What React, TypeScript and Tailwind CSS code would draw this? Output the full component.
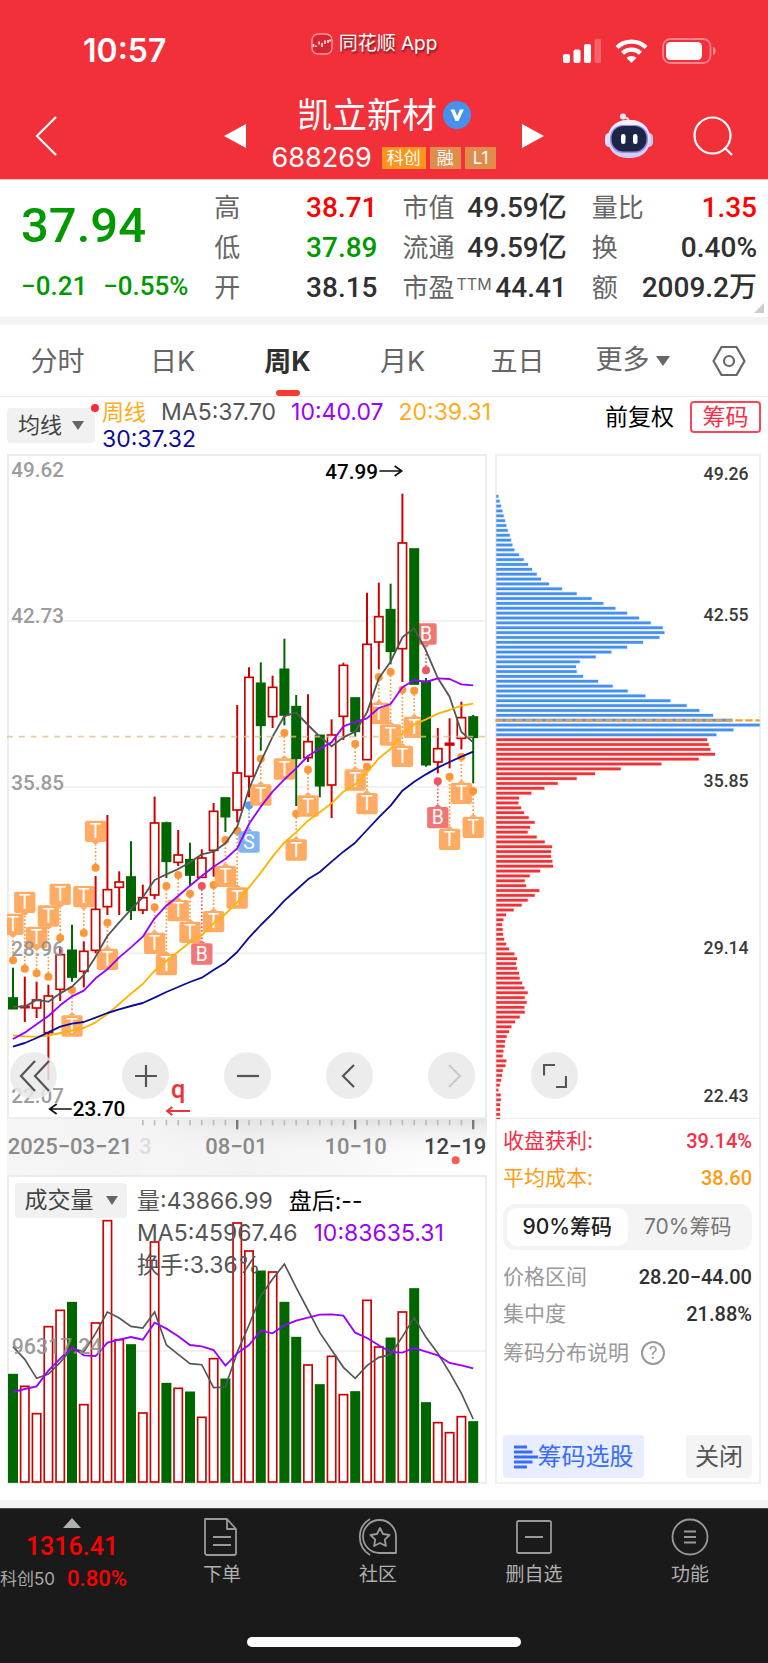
import { useState } from "react";
import clsx from "clsx";

type Candle = ["up" | "down", number, number, number, number];
type Marker = [number, "T" | "B" | "S", number, number];

const STEP = 35.4;
const cx = (i: number) => 39 + i * STEP;

// side, high, body top, body bottom, low
const candles: Candle[] = [
  ["down", 1541, 1632, 1664, 1664],
  ["up", 1568, 1657, 1661, 1704],
  ["up", 1583, 1638, 1662, 1692],
  ["up", 1592, 1626, 1736, 1878],
  ["up", 1478, 1502, 1606, 1641],
  ["down", 1412, 1489, 1569, 1583],
  ["up", 1462, 1492, 1552, 1600],
  ["up", 1266, 1366, 1489, 1498],
  ["up", 1083, 1307, 1358, 1383],
  ["up", 1252, 1284, 1300, 1383],
  ["down", 1162, 1269, 1369, 1398],
  ["up", 1292, 1331, 1368, 1380],
  ["up", 1028, 1107, 1323, 1336],
  ["down", 1103, 1107, 1222, 1272],
  ["up", 1128, 1203, 1225, 1236],
  ["down", 1166, 1217, 1263, 1293],
  ["up", 1186, 1212, 1270, 1270],
  ["up", 1047, 1072, 1189, 1268],
  ["down", 1032, 1032, 1088, 1134],
  ["up", 753, 957, 1068, 1105],
  ["up", 640, 670, 967, 1030],
  ["down", 625, 688, 814, 890],
  ["up", 665, 700, 788, 822],
  ["down", 554, 646, 783, 814],
  ["down", 723, 758, 913, 1056],
  ["up", 721, 863, 911, 924],
  ["down", 844, 844, 995, 1030],
  ["up", 796, 843, 993, 1092],
  ["up", 626, 634, 787, 858],
  ["down", 732, 732, 832, 848],
  ["up", 416, 571, 917, 917],
  ["up", 386, 488, 564, 646],
  ["down", 389, 467, 592, 631],
  ["up", 119, 267, 584, 684],
  ["down", 285, 285, 690, 690],
  ["down", 672, 682, 932, 938],
  ["up", 822, 884, 924, 958],
  ["up", 793, 868, 873, 943],
  ["up", 743, 791, 853, 886],
  ["down", 783, 789, 850, 988],
];

const priceLines = [
  {
    color: "#555555",
    ys: [1658, 1658, 1638, 1643, 1618, 1598, 1563, 1508, 1446, 1405, 1366, 1330, 1278, 1261, 1245, 1225, 1201, 1193, 1168, 1118, 1005, 923, 848, 786, 776, 813, 848, 877, 850, 833, 775, 673, 623, 550, 523, 590, 672, 728, 834, 865],
  },
  {
    color: "#ffb400",
    ys: [1744, 1747, 1748, 1745, 1737, 1730, 1722, 1705, 1680, 1650, 1619, 1590, 1550, 1521, 1493, 1465, 1444, 1408, 1380, 1345, 1300, 1256, 1208, 1165, 1135, 1100, 1075, 1048, 1013, 991, 956, 913, 885, 838, 811, 796, 779, 768, 755, 749],
  },
  {
    color: "#9900ff",
    ys: [1755, 1736, 1711, 1686, 1654, 1627, 1610, 1573, 1546, 1510, 1480, 1448, 1393, 1355, 1326, 1295, 1266, 1238, 1215, 1183, 1110, 1058, 1013, 976, 943, 906, 884, 865, 817, 804, 793, 762, 750, 700, 678, 684, 673, 675, 691, 694],
  },
  {
    color: "#0c0c9c",
    ys: [1778, 1767, 1752, 1735, 1718, 1709, 1704, 1691, 1677, 1666, 1656, 1647, 1631, 1614, 1599, 1584, 1571, 1548, 1526, 1494, 1451, 1413, 1378, 1340, 1308, 1276, 1254, 1223, 1193, 1166, 1128, 1090, 1055, 1010, 983, 961, 941, 924, 908, 893],
  },
];

// candle index, trade type, label y, dot y
const markers: Marker[] = [
  [0, "T", 1411, 1519],
  [1, "T", 1345, 1544],
  [2, "T", 1450, 1558],
  [3, "T", 1386, 1568],
  [4, "T", 1321, 1452],
  [5, "T", 1716, 1608],
  [6, "T", 1328, 1437],
  [7, "T", 1132, 1241],
  [8, "T", 1516, 1406],
  [12, "T", 1468, 1360],
  [13, "T", 1532, 1296],
  [14, "T", 1370, 1263],
  [15, "T", 1435, 1319],
  [16, "B", 1500, 1296],
  [17, "T", 1403, 1293],
  [18, "T", 1267, 1158],
  [19, "T", 1332, 1130],
  [20, "S", 1164, 1054],
  [21, "T", 1023, 914],
  [23, "T", 945, 837],
  [24, "T", 1188, 1079],
  [25, "T", 1056, 947],
  [29, "T", 978, 870],
  [30, "T", 1049, 938],
  [31, "T", 778, 669],
  [32, "T", 843, 654],
  [33, "T", 907, 707],
  [34, "T", 820, 710],
  [35, "B", 540, 649],
  [36, "B", 1091, 982],
  [37, "T", 1156, 968],
  [38, "T", 1018, 908],
  [39, "T", 1120, 1011],
];

const markerColors = {
  T: { box: "#ffa75c", dot: "#ff9638" },
  B: { box: "#f07070", dot: "#ee5560" },
  S: { box: "#78b0f2", dot: "#5a9cf0" },
};

const volumeTops = [822, 857, 939, 678, 629, 606, 912, 667, 360, 717, 733, 937, 424, 849, 863, 875, 950, 774, 836, 367, 451, 512, 514, 606, 711, 793, 853, 767, 882, 874, 599, 739, 713, 634, 565, 907, 966, 996, 948, 964];
const volumeDown = [0, 5, 10, 13, 15, 18, 21, 23, 24, 26, 29, 32, 34, 35, 39];
const volumeMa5 = [740, 778, 835, 822, 787, 745, 755, 700, 636, 654, 679, 684, 636, 735, 763, 791, 794, 863, 861, 757, 675, 588, 537, 492, 563, 630, 698, 750, 802, 835, 797, 772, 764, 710, 653, 712, 760, 817, 880, 957];
const volumeMa10 = [876, 867, 859, 812, 776, 742, 766, 768, 728, 719, 711, 719, 668, 686, 709, 735, 739, 750, 797, 760, 735, 692, 700, 676, 662, 653, 644, 643, 647, 698, 714, 736, 756, 758, 744, 755, 766, 789, 796, 805];

const chipEnds = [
  25, 29, 33, 37, 41, 45, 49, 53, 59, 63, 67, 73, 87, 101, 114, 126, 140, 153, 177, 216, 260, 305, 340, 376, 411, 447, 482, 518, 523, 508, 459, 411, 364, 317, 269, 258, 260, 279, 324, 368, 413, 466, 541, 590, 628, 669, 727, 809, 730, 679,
  651, 656, 661, 675, 626, 514, 392, 315, 260, 203, 163, 124, 87, 85, 93, 102, 116, 134, 120, 113, 140, 164, 186, 183, 183, 187, 189, 150, 119, 104, 108, 148, 134, 113, 95, 71, 48, 40, 36, 38, 39, 42, 48, 57, 73, 81, 78, 81, 87, 89, 96, 103, 113, 104, 110, 103, 104, 89, 75, 64, 57, 50, 45, 44, 40, 38, 49, 46, 38, 36, 33, 29, 25, 32, 32, 30, 30, 30, 30,
];
const CHIP_SPLIT = 50;

const toPoints = (ys: number[]) => ys.map((y, i) => `${cx(i)},${y}`).join(" ");

const DIN = "[font-family:Roboto,'Noto_Sans_CJK_SC',sans-serif]";

function StatusBar() {
  return (
    <div className="grid h-[92px] grid-cols-[1fr_auto_1fr] items-center pt-2.5">
      <span className="pl-[83px] text-[32px] leading-none font-semibold">10:57</span>
      <div className="mr-5 mb-3.5 flex items-center gap-1.5">
        <svg viewBox="0 0 22 22" className="size-[22px]" fill="none">
          <rect x="1" y="1" width="20" height="20" rx="6" fill="#d92531" stroke="#ff9a9c" strokeWidth="1.4" />
          <path d="M2.5 14v-3m2.5 3v-1.500m3-1v-3m3 5.500v-4m3 1v-3.500m3-.5v3m2-3.500v2" stroke="#fff" strokeWidth="1.500" />
        </svg>
        <span className="text-[19px] leading-6 [text-shadow:1px_2px_2px_rgba(0,0,0,0.5)]">同花顺 App</span>
      </div>
      <div className="flex items-center justify-end gap-3.5 pr-[52px]">
        <svg viewBox="0 0 38 24" className="h-6 w-[38px]" fill="#fff">
          <rect x="0" y="15" width="7" height="9" rx="2" />
          <rect x="10.500" y="10.500" width="7" height="13.500" rx="2" />
          <rect x="21" y="5" width="7" height="19" rx="2" />
          <rect x="31.500" y="0" width="7" height="24" rx="2" opacity=".25" />
        </svg>
        <svg viewBox="0 0 33 24" className="h-6 w-[33px]" fill="none" stroke="#fff" strokeWidth="4.200">
          <path d="M2 8.500a21 21 0 0 1 29 0" />
          <path d="M7.500 14.200a13 13 0 0 1 18 0" />
          <path d="M16.500 24l-5-5.200a7.500 7.500 0 0 1 10 0z" fill="#fff" stroke="none" />
        </svg>
        <svg viewBox="0 0 54 26" className="h-[26px] w-[54px]">
          <rect x="1" y="1" width="47.500" height="24" rx="7.500" fill="none" stroke="#fff" strokeOpacity=".4" strokeWidth="1.800" />
          <rect x="4" y="4" width="36" height="18" rx="4.500" fill="#fff" />
          <path d="M51 9c3.500 1 3.500 7 0 8z" fill="#fff" opacity=".45" />
        </svg>
      </div>
    </div>
  );
}

function RobotIcon() {
  return (
    <svg viewBox="0 0 48 46" className="h-[46px] w-12">
      <defs>
        <linearGradient id="robotShell" x1="0" x2="0" y1="0" y2="1">
          <stop offset="0" stopColor="#f4f4fd" />
          <stop offset="1" stopColor="#c9cdf3" />
        </linearGradient>
      </defs>
      <path d="M24 9c0-3-2-4-4-4.500" stroke="#dfe4fb" strokeWidth="2" fill="none" />
      <circle cx="18" cy="3.500" r="3" fill="#e6e9fc" />
      <rect x="0" y="20" width="9" height="14" rx="4.500" fill="#dde1fa" />
      <rect x="39" y="20" width="9" height="14" rx="4.500" fill="#c3c9f2" />
      <rect x="2.500" y="7" width="43" height="38" rx="19" fill="url(#robotShell)" />
      <rect x="5" y="12" width="38" height="28" rx="13" fill="#9d86ee" />
      <rect x="6.500" y="13" width="35" height="25.500" rx="12" fill="#1d2547" />
      <rect x="16" y="21" width="4.500" height="10" rx="2.200" fill="#fff" />
      <rect x="28" y="21" width="4.500" height="10" rx="2.200" fill="#fff" />
    </svg>
  );
}

function TitleBar() {
  return (
    <div className="grid h-[87px] grid-cols-[1fr_auto_1fr] items-center">
      <div className="pl-[35px]">
        <button type="button" aria-label="返回" className="block">
          <svg viewBox="0 0 22 40" className="h-10 w-[22px]" fill="none" stroke="#fff" strokeWidth="2.200">
            <path d="M21 1L2 20l19 19" />
          </svg>
        </button>
      </div>
      <div className="flex items-center gap-[26px]">
        <button type="button" aria-label="上一只">
          <svg viewBox="0 0 22 24" className="h-6 w-[22px]" fill="#fff"><path d="M22 0v24L0 12z" /></svg>
        </button>
        <div className="flex flex-col items-center gap-3.5 pb-1.5">
          <h1 className="flex items-center gap-1.5 text-[35px] leading-9">
            凯立新材
            <svg viewBox="0 0 28 28" className="size-7">
              <circle cx="14" cy="14" r="14" fill="#4691ee" />
              <path d="M7.500 8.500h4l2.700 6.500 2.700-6.500h4L15.500 20h-3z" fill="#fff" />
            </svg>
          </h1>
          <div className="flex items-center gap-1 text-[17px] leading-[22px]">
            <span className="mr-1.5 text-[27px]">688269</span>
            <span className="bg-[#fd951b] px-[5px]">科创</span>
            <span className="bg-[#e08c4b] px-[7px]">融</span>
            <span className="bg-[#e08c4b] px-2">L1</span>
          </div>
        </div>
        <button type="button" aria-label="下一只">
          <svg viewBox="0 0 22 24" className="h-6 w-[22px]" fill="#fff"><path d="M0 0v24l22-12z" /></svg>
        </button>
      </div>
      <div className="flex items-center justify-end gap-10 pr-[35px]">
        <button type="button" aria-label="智能助手"><RobotIcon /></button>
        <button type="button" aria-label="搜索">
          <svg viewBox="0 0 40 40" className="size-10" fill="none" stroke="#fff" strokeWidth="2.200">
            <circle cx="19.500" cy="19.500" r="18" />
            <path d="M32 32l7 7" />
          </svg>
        </button>
      </div>
    </div>
  );
}

const quoteColumns = [
  [
    { label: "高", value: "38.71", color: "text-[#ff0000]" },
    { label: "低", value: "37.89", color: "text-[#009900]" },
    { label: "开", value: "38.15", color: "text-[#303030]" },
  ],
  [
    { label: "市值", value: "49.59亿", color: "text-[#303030]" },
    { label: "流通", value: "49.59亿", color: "text-[#303030]" },
    { label: "市盈", sup: "TTM", value: "44.41", color: "text-[#303030]" },
  ],
  [
    { label: "量比", value: "1.35", color: "text-[#ff0000]" },
    { label: "换", value: "0.40%", color: "text-[#303030]" },
    { label: "额", value: "2009.2万", color: "text-[#303030]" },
  ],
];

function Quote() {
  return (
    <section className="relative grid h-[138px] grid-cols-[168fr_163fr_164fr_165fr] gap-[25px] border-t border-[#f8c0c2] pt-2 pr-[11px] pl-[21px]">
      <div className={clsx("min-w-0 font-medium whitespace-nowrap text-[#009900]", DIN)}>
        <p className="pt-2.5 text-[49px] leading-[56px]">37.94</p>
        <p className="mt-4 flex gap-4 text-[26px] leading-8">
          <span>−0.21</span>
          <span>−0.55%</span>
        </p>
      </div>
      {quoteColumns.map((rows, i) => (
        <dl key={i} className="min-w-0">
          {rows.map((row) => (
            <div key={row.label} className="flex h-10 items-center justify-between whitespace-nowrap">
              <dt className="flex text-[26px] leading-10 text-[#666]">
                {row.label}
                {row.sup && <sup className="top-0 ml-0.5 text-[16px] leading-8">{row.sup}</sup>}
              </dt>
              <dd className={clsx("text-[28px] leading-10 font-medium", DIN, row.color)}>{row.value}</dd>
            </div>
          ))}
        </dl>
      ))}
      <svg viewBox="0 0 10 10" className="absolute right-1 bottom-1 size-2.5" fill="#ccc"><path d="M10 0v10H0z" /></svg>
    </section>
  );
}

const periods = ["分时", "日K", "周K", "月K", "五日"];

function PeriodTabs() {
  const [active, setActive] = useState("周K");
  return (
    <nav className="flex h-[71px] border-t-8 border-b border-t-[#f3f3f3] border-b-[#eee] box-content text-[27px] text-[#666]">
      {periods.map((p) => (
        <button
          key={p}
          type="button"
          onClick={() => setActive(p)}
          className={clsx(
            "flex flex-[115] flex-col items-center justify-end",
            active === p && "font-bold text-[#303030]"
          )}
        >
          <span className="leading-[56px]">{p}</span>
          <span className={clsx("h-1.5 w-6 rounded-sm", active === p ? "bg-[#fb3a32]" : "bg-transparent")} />
        </button>
      ))}
      <button type="button" className="flex flex-[115] items-center justify-center gap-1.5">
        更多
        <svg viewBox="0 0 14 10" className="h-2.5 w-3.5" fill="#666"><path d="M0 0h14L7 10z" /></svg>
      </button>
      <button type="button" aria-label="设置" className="flex flex-[78] items-center justify-center">
        <svg viewBox="0 0 34 32" className="h-8 w-[34px]" fill="none" stroke="#666" strokeWidth="2.200">
          <path d="M9.500 2h15L32.500 16l-8 14h-15L1.500 16z" strokeLinejoin="round" />
          <circle cx="17" cy="16" r="5" />
        </svg>
      </button>
    </nav>
  );
}

function IndicatorRow() {
  return (
    <div className="flex h-[57px] items-start pl-[7px] pr-[7px]">
      <button type="button" className="relative mt-[11px] flex h-[35px] w-[88px] items-center justify-center gap-2.5 rounded bg-[#f1f1f1] text-[22px] text-[#444]">
        均线
        <svg viewBox="0 0 12 9" className="h-[9px] w-3" fill="#666"><path d="M0 0h12L6 9z" /></svg>
        <span className="absolute -top-1 -right-1 size-2 rounded-full bg-[#fb2c3a]" />
      </button>
      <div className="mt-0.5 ml-[7px] flex max-w-[440px] flex-1 flex-wrap gap-x-[15px] text-[23px] leading-[27px] whitespace-nowrap">
        <span className="text-[22px] text-[#ffac1c]">周线</span>
        <span className="text-[#555]">MA5:37.70</span>
        <span className="text-[#9900ff]">10:40.07</span>
        <span className="text-[#ffac1c]">20:39.31</span>
        <span className="text-[#0c0c9c]">30:37.32</span>
      </div>
      <div className="mt-1 ml-auto flex items-center gap-4 text-[23px] leading-8">
        <button type="button" className="text-black">前复权</button>
        <button type="button" className="h-8 w-[71px] rounded border-2 border-[#fb4455] leading-7 text-[#fb2c45]">筹码</button>
      </div>
    </div>
  );
}

function TradeMarker({ marker }: { marker: Marker }) {
  const [i, kind, y, dot] = marker;
  const x = cx(i);
  const colors = markerColors[kind];
  const below = y > dot;
  const edge = below ? y - 32 : y + 32;
  const tip = below ? edge - 9 : edge + 9;
  return (
    <g>
      <line x1={x} x2={x} y1={dot} y2={tip} stroke={colors.dot} strokeWidth="5" strokeDasharray="5 6" />
      <circle cx={x} cy={dot} r="12" fill={colors.dot} />
      <path d={`M${x - 11} ${edge}L${x} ${tip}L${x + 11} ${edge}z`} fill={colors.box} />
      <rect x={x - 32} y={y - 32} width="64" height="64" rx="6" fill={colors.box} fillOpacity=".95" />
      <text x={x} y={y + 20} textAnchor="middle" fontSize="58" fill="#fff">{kind}</text>
    </g>
  );
}

function ChartControls() {
  const icons = [
    { label: "最早", d: "M20 4L6 19l14 15M34 4L20 19l14 15", color: "#555" },
    { label: "放大", d: "M19 8v22M8 19h22", color: "#555" },
    { label: "缩小", d: "M8 19h22", color: "#555" },
    { label: "向左", d: "M23 8L12 19l11 11", color: "#555" },
    { label: "向右", d: "M16 8l11 11-11 11", color: "#ccc" },
  ];
  return (
    <div className="absolute inset-x-[3px] bottom-5 flex gap-[55px]">
      {icons.map((icon) => (
        <button
          key={icon.label}
          type="button"
          aria-label={icon.label}
          className="flex size-[47px] shrink-0 items-center justify-center rounded-full bg-[#e9e9e9]/85 first:mr-2.5"
        >
          <svg viewBox="0 0 38 38" className="size-[38px]" fill="none" stroke={icon.color} strokeWidth="2.200"><path d={icon.d} /></svg>
        </button>
      ))}
    </div>
  );
}

function PriceChart() {
  return (
    <div className="relative shadow-[inset_0_0_0_2px_#ececec]">
      <svg viewBox="21 0 1440 1995" className={clsx("block w-full", DIN)}>
        {[501, 999, 1498].map((y) => (
          <line key={y} x1="27" x2="1455" y1={y} y2={y} stroke="#f1f1f1" strokeWidth="6" />
        ))}
        {markers.map((m) => <TradeMarker key={m[0]} marker={m} />)}
        {candles.map(([side, high, top, bottom, low], i) => {
          const color = side === "up" ? "#cc0000" : "#006600";
          return (
            <g key={i} stroke={color} strokeWidth="5">
              <line x1={cx(i)} x2={cx(i)} y1={high} y2={low} strokeWidth="6" />
              <rect x={cx(i) - 12.500} y={top} width="25" height={bottom - top} fill={side === "up" ? "#fff" : color} />
            </g>
          );
        })}
        {priceLines.map((line) => (
          <polyline key={line.color} points={toPoints(line.ys)} fill="none" stroke={line.color} strokeWidth="5.500" strokeLinejoin="round" />
        ))}
        <line x1="21" x2="1458" y1="848" y2="848" stroke="#e0c08c" strokeOpacity=".8" strokeWidth="5" strokeDasharray="18 17.400" />
        <g fontSize="62" fill="#8f8f8f" fillOpacity=".9" fontWeight="500">
          <text x="34" y="70">49.62</text>
          <text x="34" y="508">42.73</text>
          <text x="34" y="1007">35.85</text>
          <text x="34" y="1506">28.96</text>
          <text x="34" y="1946">22.07</text>
        </g>
        <g fontSize="62" fontWeight="500" fill="#000">
          <text x="1134" y="76" textAnchor="end">47.99</text>
          <text x="218" y="1986">23.70</text>
        </g>
        <g fill="none" stroke="#111" strokeWidth="5">
          <path d="M1138 51h66m-20-15l21 15-21 15" />
          <path d="M215 1965h-65m20-15l-21 15 21 15" />
        </g>
        <text x="513" y="1933" fontSize="76" fontWeight="500" fill="#ee3338">q</text>
        <path d="M570 1971h-68m15-12l-16 12 16 12" fill="none" stroke="#ee3338" strokeWidth="6" />
      </svg>
      <ChartControls />
    </div>
  );
}

function DateAxis() {
  const ticks = Array.from({ length: 29 }, (_, i) => i + 11);
  return (
    <div className="bg-linear-to-r from-[#f5f5f5] via-[#f3f3f3] to-white">
      <svg viewBox="21 57 1440 168" className={clsx("block w-full", DIN)} fontSize="66" fontWeight="500">
        <defs>
          <linearGradient id="axisShade" x1="0" x2="0" y1="0" y2="1">
            <stop offset="0" stopColor="#e2e2e2" />
            <stop offset="1" stopColor="#f5f5f5" stopOpacity="0" />
          </linearGradient>
          <linearGradient id="axisFade">
            <stop offset="0" stopColor="#f5f5f5" />
            <stop offset=".3" stopColor="#f5f5f5" stopOpacity="0" />
          </linearGradient>
        </defs>
        <rect x="420" y="57" width="1041" height="110" fill="url(#axisShade)" />
        <rect x="420" y="57" width="1041" height="168" fill="url(#axisFade)" />
        {ticks.map((i) => {
          const long = i === 19 || i === 29 || i === 39;
          return (
            <line key={i} x1={cx(i)} x2={cx(i)} y1="60" y2={long ? 88 : 76} stroke={long ? "#777" : "#bbb"} strokeWidth={long ? 7 : 5} />
          );
        })}
        <text x="23" y="163" fill="#8a8a8a">2025−03−21</text>
        <text x="417" y="163" fill="#dcdcdc">3</text>
        <text x="709" y="163" textAnchor="middle" fill="#8a8a8a">08−01</text>
        <text x="1067" y="163" textAnchor="middle" fill="#8a8a8a">10−10</text>
        <text x="1459" y="163" textAnchor="end" fill="#444">12−19</text>
        <circle cx="1367" cy="181" r="12" fill="#f85a5a" />
      </svg>
    </div>
  );
}

function VolumeChart() {
  return (
    <div className="relative shadow-[inset_0_0_0_2px_#ececec]">
      <svg viewBox="21 225 1440 927" className={clsx("block w-full", DIN)}>
        <line x1="27" x2="1455" y1="753" y2="753" stroke="#f1f1f1" strokeWidth="6" />
        {volumeTops.map((top, i) => {
          const down = volumeDown.includes(i);
          const color = down ? "#006600" : "#cc0000";
          return (
            <rect key={i} x={cx(i) - 12.500} y={top + 2} width="25" height={1144 - top} fill={down ? color : "#fff"} stroke={color} strokeWidth="5" />
          );
        })}
        <polyline points={toPoints(volumeMa5)} fill="none" stroke="#555" strokeWidth="5" />
        <polyline points={toPoints(volumeMa10)} fill="none" stroke="#9900ff" strokeWidth="5.500" />
        <text x="35" y="763" fontSize="64" fontWeight="500" fill="#8f8f8f" fillOpacity=".9">96317.24</text>
      </svg>
      <div className="absolute inset-x-2 top-2 flex items-start gap-2.5">
        <button type="button" className="flex h-[35px] w-28 items-center justify-center gap-3 rounded bg-[#f1f1f1] text-[23px] text-[#444]">
          成交量
          <svg viewBox="0 0 12 9" className="h-[9px] w-3" fill="#666"><path d="M0 0h12L6 9z" /></svg>
        </button>
        <div className="pt-0.5 text-[23px] leading-8 text-[#555]">
          <p className="flex gap-4"><span>量:43866.99</span><span className="text-black">盘后:--</span></p>
          <p className="flex gap-4"><span>MA5:45967.46</span><span className="text-[#9900ff]">10:83635.31</span></p>
          <p>换手:3.36%</p>
        </div>
      </div>
    </div>
  );
}

function ChipChart() {
  return (
    <div className="relative">
      <svg viewBox="15 0 798 1995" className={clsx("block w-full", DIN)}>
        <line x1="15" x2="813" y1="1994" y2="1994" stroke="#f0f0f0" strokeWidth="5" />
        {chipEnds.map((end, i) => (
          <g key={i} fill={i < CHIP_SPLIT ? "#448ff0" : "#ee3338"}>
            <rect x="19" y={121 + i * 14.600} width={end - 17} height="12" opacity=".2" />
            <rect x="19" y={123 + i * 14.600} width={end - 19} height="8" />
          </g>
        ))}
        <line x1="16" x2="809" y1="799" y2="799" stroke="#f79a2c" strokeWidth="7" strokeDasharray="22 8" />
        <g fontSize="53" fontWeight="500" fill="#3a3a3a" textAnchor="end">
          <text x="776" y="79">49.26</text>
          <text x="776" y="501">42.55</text>
          <text x="776" y="999">35.85</text>
          <text x="776" y="1499">29.14</text>
          <text x="776" y="1944">22.43</text>
        </g>
      </svg>
      <button type="button" aria-label="全屏" className="absolute bottom-5 left-9 flex size-[47px] items-center justify-center rounded-full bg-[#e9e9e9]/85">
        <svg viewBox="0 0 24 24" className="size-6" fill="none" stroke="#555" strokeWidth="2.200"><path d="M1 11.500V1h11M13 23h10V12" /></svg>
      </button>
    </div>
  );
}

function ChipInfo() {
  const [range, setRange] = useState("90%筹码");
  const row = "flex h-[37px] items-center justify-between";
  const value = clsx("text-[20px] font-medium", DIN);
  return (
    <div className="flex flex-1 flex-col pt-[3px] pr-[9px] pb-1.5 pl-2 text-[21px] text-[#999]">
      <div className={clsx(row, "text-[#fb2c45]")}><span>收盘获利:</span><span className={value}>39.14%</span></div>
      <div className={clsx(row, "text-[#ff9b13]")}><span>平均成本:</span><span className={value}>38.60</span></div>
      <div className="my-2 flex h-[46px] rounded-xl bg-[#f4f4f4] p-1">
        {["90%筹码", "70%筹码"].map((item) => (
          <button
            key={item}
            type="button"
            onClick={() => setRange(item)}
            className={clsx(
              "flex-1 rounded-[10px] leading-[38px]",
              range === item ? "bg-white font-medium text-[#222]" : "text-[#777]"
            )}
          >
            {item}
          </button>
        ))}
      </div>
      <div className={row}><span>价格区间</span><span className={clsx(value, "text-[#303030]")}>28.20−44.00</span></div>
      <div className={row}><span>集中度</span><span className={clsx(value, "text-[#303030]")}>21.88%</span></div>
      <div className="mt-0.5 flex h-[37px] items-center gap-3">
        <span>筹码分布说明</span>
        <button type="button" aria-label="说明" className="size-6 rounded-full border-2 border-[#999] text-[17px] leading-5">?</button>
      </div>
      <div className="mt-auto flex justify-between text-[24px]">
        <button type="button" className="flex h-[43px] w-[141px] items-center justify-center rounded bg-[#e8edff] text-[#3a6bff]">
          <svg viewBox="0 0 24 24" className="size-6" stroke="#3a6bff" strokeWidth="3"><path d="M0 2h13M0 7h18.500M0 12h24M0 17h18.500M0 22h13" /></svg>
          筹码选股
        </button>
        <button type="button" className="h-[43px] w-[66px] rounded bg-[#f4f4f4] text-[#555]">关闭</button>
      </div>
    </div>
  );
}

const navItems = [
  {
    label: "下单",
    icon: <path d="M3 2h22l9 10v24a2 2 0 0 1-2 2H5a2 2 0 0 1-2-2V2zM25 2v10h9M11 20h18M11 28h18" />,
  },
  {
    label: "社区",
    icon: (
      <>
        <path d="M38 36H22A16.500 16.500 0 1 1 38 20zM12 2a21 21 0 0 0 0 36" />
        <path d="M22 11l3 6 6.500 1-4.700 4.600 1.100 6.400-5.900-3-5.900 3 1.100-6.400-4.700-4.600 6.500-1z" />
      </>
    ),
  },
  {
    label: "删自选",
    icon: <path d="M4 4h32a1.500 1.500 0 0 1 1 1v30a1.500 1.500 0 0 1-1 1H4a1.500 1.500 0 0 1-1-1V5a1.500 1.500 0 0 1 1-1zM11 20h18" />,
  },
  {
    label: "功能",
    icon: (
      <>
        <circle cx="20" cy="20" r="17.500" />
        <path d="M14 14.500h12M14 20h12M14 25.500h12" />
      </>
    ),
  },
];

function BottomBar() {
  return (
    <footer className="mt-4 border-t-8 border-[#f3f3f3]">
      <div className="flex h-[155px] flex-col border-t border-[#444] bg-[#1a1a1a]">
        <div className="flex">
          <button type="button" className="flex w-36 flex-col items-center pt-[9px]">
            <svg viewBox="0 0 18 10" className="h-2.5 w-[18px]" fill="#b0b0b0"><path d="M9 0l9 10H0z" /></svg>
            <span className={clsx("mt-1 text-[25px] leading-[30px] font-medium text-[#ff0000]", DIN)}>1316.41</span>
            <span className="mt-0.5 flex w-full items-center gap-3 leading-[30px] whitespace-nowrap">
              <span className="text-[17px] text-[#a8a8a8]">科创50</span>
              <span className={clsx("text-[22px] font-medium text-[#ff0000]", DIN)}>0.80%</span>
            </span>
          </button>
          {navItems.map((item) => (
            <a key={item.label} href="#" className="flex flex-1 flex-col items-center pt-2 text-[19px] leading-7 text-[#b0b0b0]">
              <svg viewBox="0 0 40 40" className="size-10" fill="none" stroke="#999" strokeWidth="1.800" strokeLinejoin="round">{item.icon}</svg>
              <span className="mt-1">{item.label}</span>
            </a>
          ))}
        </div>
        <div className="mx-auto mt-auto mb-4 h-2.5 w-[274px] rounded-full bg-white" />
      </div>
    </footer>
  );
}

export default function App() {
  return (
    <div className="w-full overflow-hidden bg-white [font-family:Inter,'Noto_Sans_CJK_SC',sans-serif]">
      <header className="bg-[#f23039] text-white">
        <StatusBar />
        <TitleBar />
      </header>
      <Quote />
      <PeriodTabs />
      <IndicatorRow />
      <main className="grid grid-cols-[480fr_266fr] gap-2 px-[7px]">
        <section>
          <PriceChart />
          <DateAxis />
          <VolumeChart />
        </section>
        <section className="flex flex-col shadow-[inset_0_0_0_2px_#f0f0f0]">
          <ChipChart />
          <ChipInfo />
        </section>
      </main>
      <BottomBar />
    </div>
  );
}
